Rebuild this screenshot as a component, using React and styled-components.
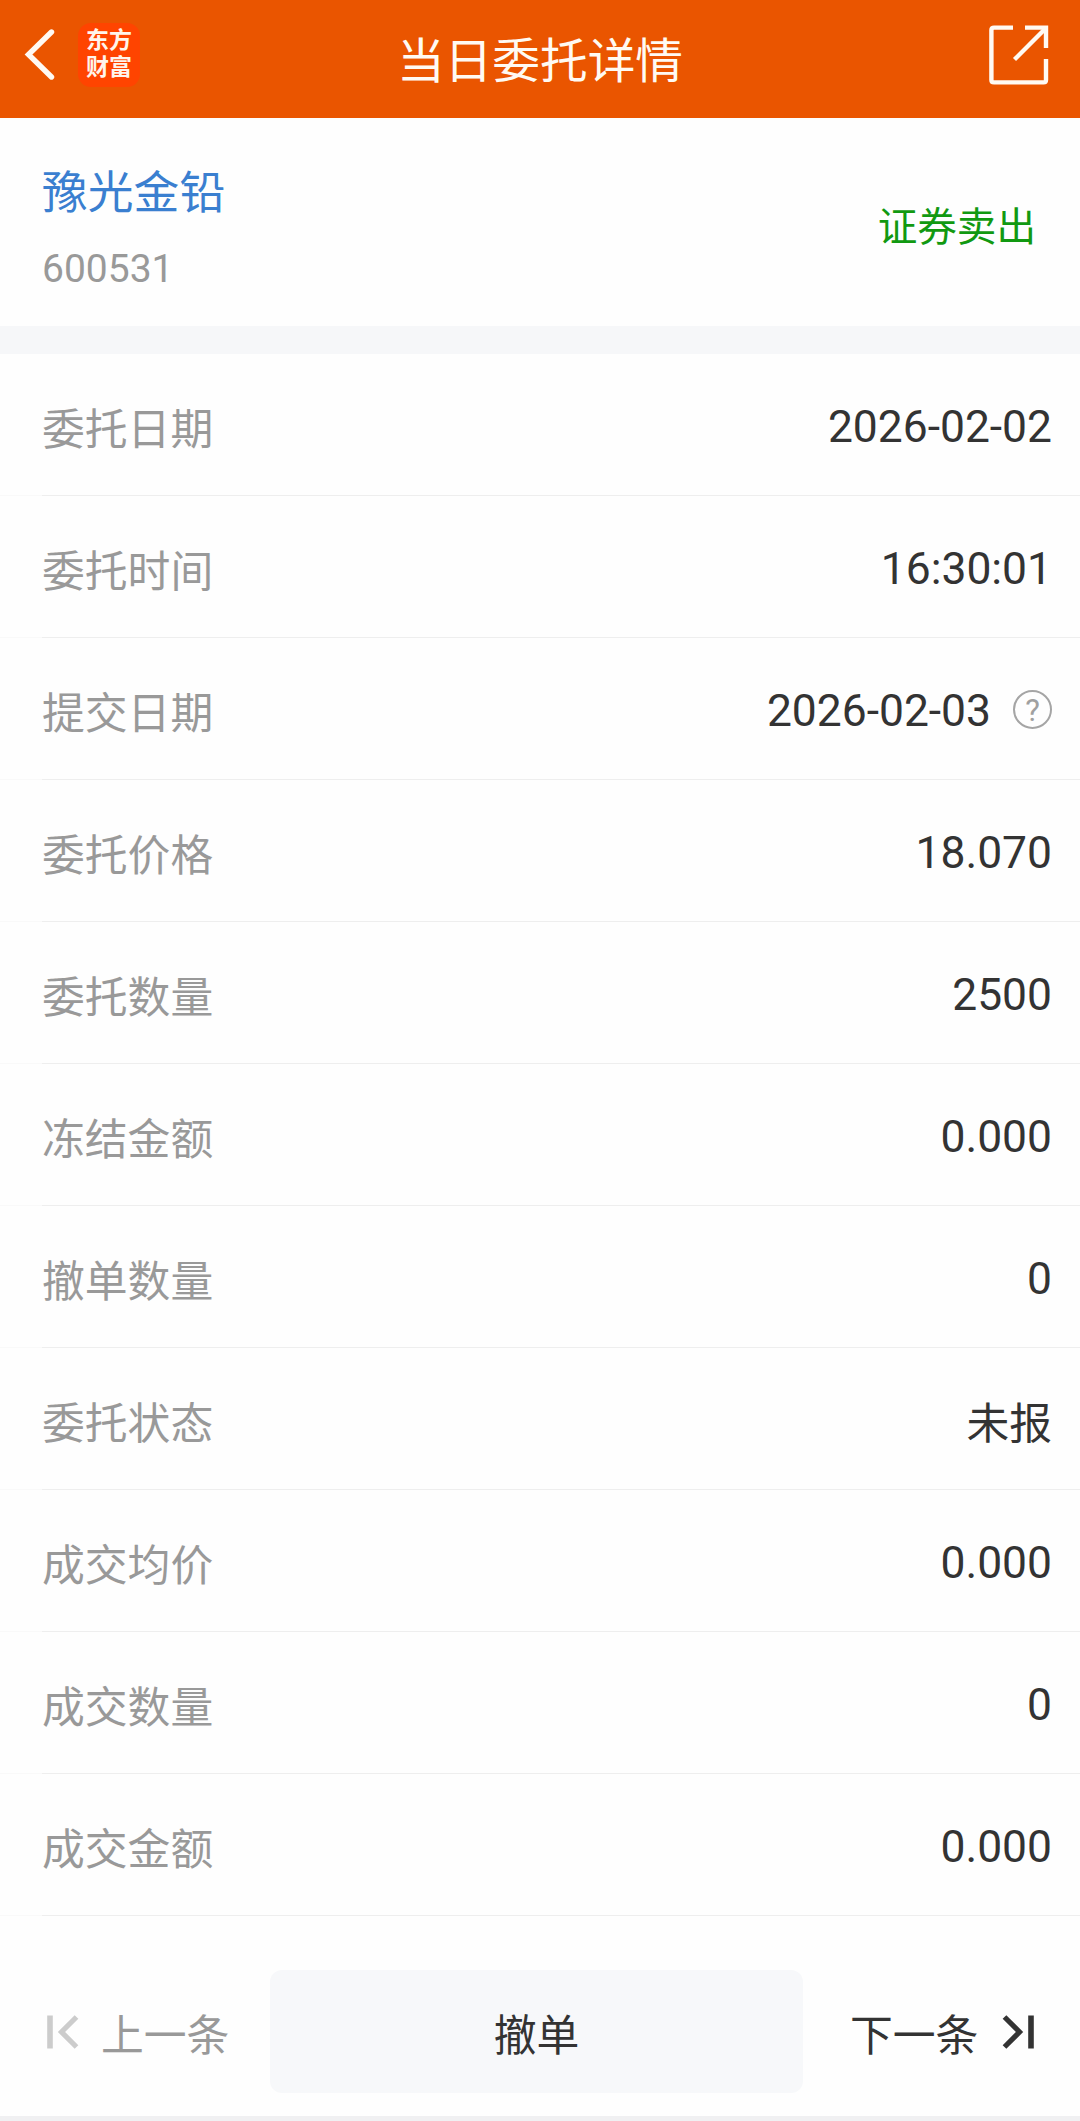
import React from "react";
import styled, { createGlobalStyle } from "styled-components";

const rows = [
  { label: "委托日期", value: "2026-02-02" },
  { label: "委托时间", value: "16:30:01" },
  { label: "提交日期", value: "2026-02-03", help: true },
  { label: "委托价格", value: "18.070" },
  { label: "委托数量", value: "2500" },
  { label: "冻结金额", value: "0.000" },
  { label: "撤单数量", value: "0" },
  { label: "委托状态", value: "未报", cjk: true },
  { label: "成交均价", value: "0.000" },
  { label: "成交数量", value: "0" },
  { label: "成交金额", value: "0.000" },
];

function BackIcon() {
  return (
    <svg width="32" height="52" viewBox="0 0 32 52" fill="none">
      <path
        d="M28.5 3L5.5 25.5L28.5 48"
        stroke="#fffaf3"
        strokeWidth="5.4"
        strokeLinecap="round"
      />
    </svg>
  );
}

function ShareIcon() {
  return (
    <svg width="60" height="60" viewBox="0 0 60 60" fill="none">
      <g stroke="#fffaf3" strokeWidth="4.4">
        <path d="M24 2.6H5Q2.4 2.6 2.4 5V55Q2.4 57.4 5 57.4H54.5Q57 57.4 57 55V34" />
        <path d="M36 2.6H57V23" />
        <path d="M25.5 34.5L56 4" />
      </g>
    </svg>
  );
}

function StepIcon({ color, flip }) {
  return (
    <StepSvg
      width="32"
      height="34"
      viewBox="0 0 32 34"
      fill="none"
      $flip={flip}
    >
      <path d="M3 0.5V33.5" stroke={color} strokeWidth="5.6" />
      <path d="M29.5 2L14.5 17L29.5 32" stroke={color} strokeWidth="5.2" />
    </StepSvg>
  );
}

function App() {
  return (
    <Page>
      <GlobalStyle />
      <Header>
        <HeaderSide>
          <BackIcon />
          <Logo>
            <span>东方</span>
            <span>财富</span>
          </Logo>
        </HeaderSide>
        <Title>当日委托详情</Title>
        <HeaderSide $end>
          <ShareIcon />
        </HeaderSide>
      </Header>

      <Summary>
        <Stock>
          <StockName>豫光金铅</StockName>
          <StockCode>600531</StockCode>
        </Stock>
        <Direction>证券卖出</Direction>
      </Summary>

      <List>
        {rows.map((row) => (
          <Row key={row.label}>
            <Label>{row.label}</Label>
            <Value $cjk={row.cjk}>
              {row.value}
              {row.help && <Help>?</Help>}
            </Value>
          </Row>
        ))}
      </List>

      <Footer>
        <Step $color="#999">
          <StepIcon color="#ccc" />
          <StepText>上一条</StepText>
        </Step>
        <CancelButton>撤单</CancelButton>
        <Step $color="#333" $end>
          <StepText>下一条</StepText>
          <StepIcon color="#333" flip />
        </Step>
      </Footer>
    </Page>
  );
}

const GlobalStyle = createGlobalStyle`
  * {
    box-sizing: border-box;
  }
  body {
    margin: 0;
    background: #f0f0f2;
    font-family: Roboto, "Noto Sans CJK SC", sans-serif;
  }
`;

const Page = styled.div`
  width: 1080px;
  height: 2121px;
  display: flex;
  flex-direction: column;
  background: #fefefe;
  border-bottom: 5px solid #f0f0f2;
`;

const Header = styled.header`
  height: 118px;
  flex-shrink: 0;
  display: grid;
  grid-template-columns: 1fr auto 1fr;
  padding: 0 31px 0 23px;
  background: #ea5500;
`;

const HeaderSide = styled.div`
  display: flex;
  align-items: center;
  justify-content: ${({ $end }) => ($end ? "flex-end" : "flex-start")};
  gap: 23px;
  height: 109px;
`;

const Logo = styled.div`
  width: 62px;
  height: 64px;
  padding-top: 4px;
  border-radius: 13px;
  background: #ff4400;
  color: #fff5ec;
  display: flex;
  flex-direction: column;
  align-items: center;
  font-size: 23px;
  font-weight: 700;
  line-height: 27px;
`;

const Title = styled.h1`
  margin: 0;
  padding: 3px 0 0 8px;
  color: #fffaf3;
  font-size: 47.7px;
  font-weight: 400;
  line-height: 118px;
`;

const Summary = styled.section`
  height: 236px;
  flex-shrink: 0;
  display: flex;
  align-items: center;
  justify-content: space-between;
  padding: 0 44px 0 42px;
  border-bottom: 28px solid #f6f7f9;
`;

const Stock = styled.div`
  padding-top: 18px;
`;

const StockName = styled.div`
  padding-top: 1px;
  color: #3a7fd0;
  font-size: 45.8px;
  line-height: 68px;
`;

const StockCode = styled.div`
  margin-top: 7px;
  color: #999;
  font-size: 39px;
  line-height: 68px;
`;

const Direction = styled.div`
  padding-top: 11px;
  color: #119911;
  font-size: 39.6px;
  line-height: 60px;
`;

const List = styled.section`
  display: flex;
  flex-direction: column;
`;

const Row = styled.div`
  height: 142px;
  display: flex;
  align-items: center;
  justify-content: space-between;
  padding: 4px 28px 0 42px;
  background: linear-gradient(to right, #f9f9f9 42px, #eeeeee 42px) bottom /
    100% 1px no-repeat;
`;

const Label = styled.span`
  padding-top: 5px;
  color: #999;
  font-size: 42.8px;
  line-height: 64px;
`;

const Value = styled.span`
  display: flex;
  align-items: center;
  padding-top: ${({ $cjk }) => ($cjk ? "5px" : "0")};
  color: #333;
  font-size: ${({ $cjk }) => ($cjk ? "42.8px" : "44.4px")};
  line-height: 64px;
`;

const Help = styled.span`
  width: 39px;
  height: 39px;
  margin: 0 0 4px 22px;
  border: 2px solid #a5a5a5;
  border-radius: 50%;
  color: #a0a0a0;
  font-size: 31px;
  line-height: 37px;
  text-align: center;
`;

const Footer = styled.footer`
  flex: 1;
  display: grid;
  grid-template-columns: 270px 533px 1fr;
  align-items: start;
  padding-top: 54px;
`;

const Step = styled.div`
  height: 123px;
  display: flex;
  align-items: center;
  justify-content: ${({ $end }) => ($end ? "flex-end" : "flex-start")};
  gap: ${({ $end }) => ($end ? "24px" : "22px")};
  padding: 0 ${({ $end }) => ($end ? "48px" : "0")} 0 47px;
  color: ${({ $color }) => $color};
  white-space: nowrap;
`;

const StepSvg = styled.svg`
  flex-shrink: 0;
  transform: ${({ $flip }) => ($flip ? "scaleX(-1)" : "none")};
`;

const StepText = styled.span`
  padding-top: 8px;
  font-size: 42.8px;
  line-height: 64px;
`;

const CancelButton = styled.button`
  height: 123px;
  padding: 8px 0 0;
  border: 0;
  border-radius: 12px;
  background: #f7f8fa;
  color: #333;
  font-family: inherit;
  font-size: 42.8px;
  line-height: 64px;
`;

export default App;
